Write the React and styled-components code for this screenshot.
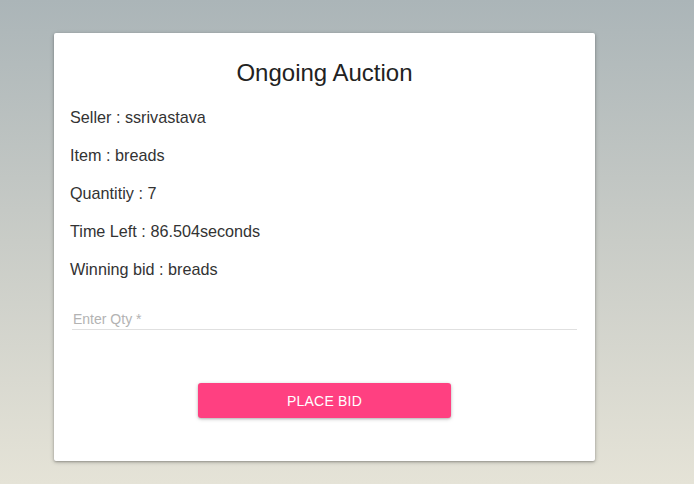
import React, { useState } from 'react';
import styled, { createGlobalStyle } from 'styled-components';

const GlobalStyle = createGlobalStyle`
  html, body {
    margin: 0;
    padding: 0;
  }
  body {
    font-family: "Liberation Sans", Arial, sans-serif;
    min-height: 484px;
    background: linear-gradient(to bottom, #abb5b8 0%, #c9ccc7 50%, #e5e3d7 100%);
  }
`;

const Page = () => {
  const [qty, setQty] = useState('');
  const details = [
    ['Seller', 'ssrivastava'],
    ['Item', 'breads'],
    ['Quantitiy', '7'],
    ['Time Left', '86.504seconds'],
    ['Winning bid', 'breads'],
  ];

  return (
    <Wrapper>
      <Card>
        <Title>Ongoing Auction</Title>
        <Details>
          {details.map(([label, value]) => (
            <Row key={label}>{label} : {value}</Row>
          ))}
        </Details>
        <Field>
          <QtyInput
            value={qty}
            onChange={(e) => setQty(e.target.value)}
            placeholder="Enter Qty *"
          />
        </Field>
        <Actions>
          <BidButton>PLACE BID</BidButton>
        </Actions>
      </Card>
    </Wrapper>
  );
};

export default function App() {
  return (
    <>
      <GlobalStyle />
      <Page />
    </>
  );
}

const Wrapper = styled.div`
  display: flex;
  padding: 33px 0 0 54px;
`;

const Card = styled.div`
  width: 541px;
  box-sizing: border-box;
  background: #fff;
  border-radius: 2px;
  padding: 26px 16px 43px;
  box-shadow: 0 1px 4px rgba(0, 0, 0, 0.25), 0 1px 2px rgba(0, 0, 0, 0.2);
`;

const Title = styled.h2`
  margin: 0;
  text-align: center;
  font-size: 24px;
  line-height: 28px;
  font-weight: normal;
  color: #222;
`;

const Details = styled.div`
  display: flex;
  flex-direction: column;
  gap: 16px;
  margin-top: 19px;
`;

const Row = styled.p`
  margin: 0;
  font-size: 16.2px;
  line-height: 22px;
  color: #333;
`;

const Field = styled.div`
  margin: 29px 2px 0;
  border-bottom: 1px solid #e0e0e0;
`;

const QtyInput = styled.input`
  display: block;
  width: 100%;
  box-sizing: border-box;
  border: none;
  outline: none;
  padding: 0 1px;
  height: 20px;
  font-family: inherit;
  font-size: 14px;
  color: #333;
  background: transparent;
  &::placeholder {
    color: #b3b3b3;
  }
`;

const Actions = styled.div`
  display: flex;
  justify-content: center;
  margin-top: 53px;
`;

const BidButton = styled.button`
  width: 253px;
  height: 35px;
  border: none;
  border-radius: 3px;
  background: #ff4081;
  color: #fff;
  font-family: inherit;
  font-size: 14px;
  letter-spacing: 0.2px;
  cursor: pointer;
  box-shadow: 0 1px 4px rgba(0, 0, 0, 0.2), 0 1px 2px rgba(0, 0, 0, 0.15);
`;
